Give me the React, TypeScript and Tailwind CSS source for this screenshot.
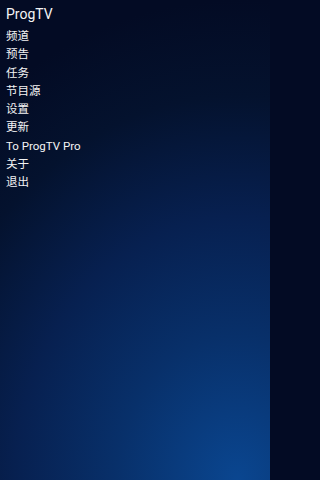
import React from "react";

const items = ["频道", "预告", "任务", "节目源", "设置", "更新", "To ProgTV Pro", "关于", "退出"];

export default function App() {
  return (
    <div className="min-h-screen w-full bg-[#030b24]">
      <div
        className="w-[270px] h-[480px] overflow-hidden bg-[radial-gradient(ellipse_150%_100%_at_88%_100%,#0a4690_0%,#08306a_30%,#072050_55%,#04122e_80%,#030b24_100%)] text-[#f4f4f4] pl-[6px] pt-[4px]"
        style={{ fontFamily: 'Roboto, "Noto Sans CJK SC", sans-serif' }}
      >
        <div className="text-[14px] leading-[20px]">ProgTV</div>
        <div className="mt-[3px] flex flex-col">
          {items.map((t) => (
            <div key={t} className="text-[11.5px] leading-[18.25px]">
              {t}
            </div>
          ))}
        </div>
      </div>
    </div>
  );
}
